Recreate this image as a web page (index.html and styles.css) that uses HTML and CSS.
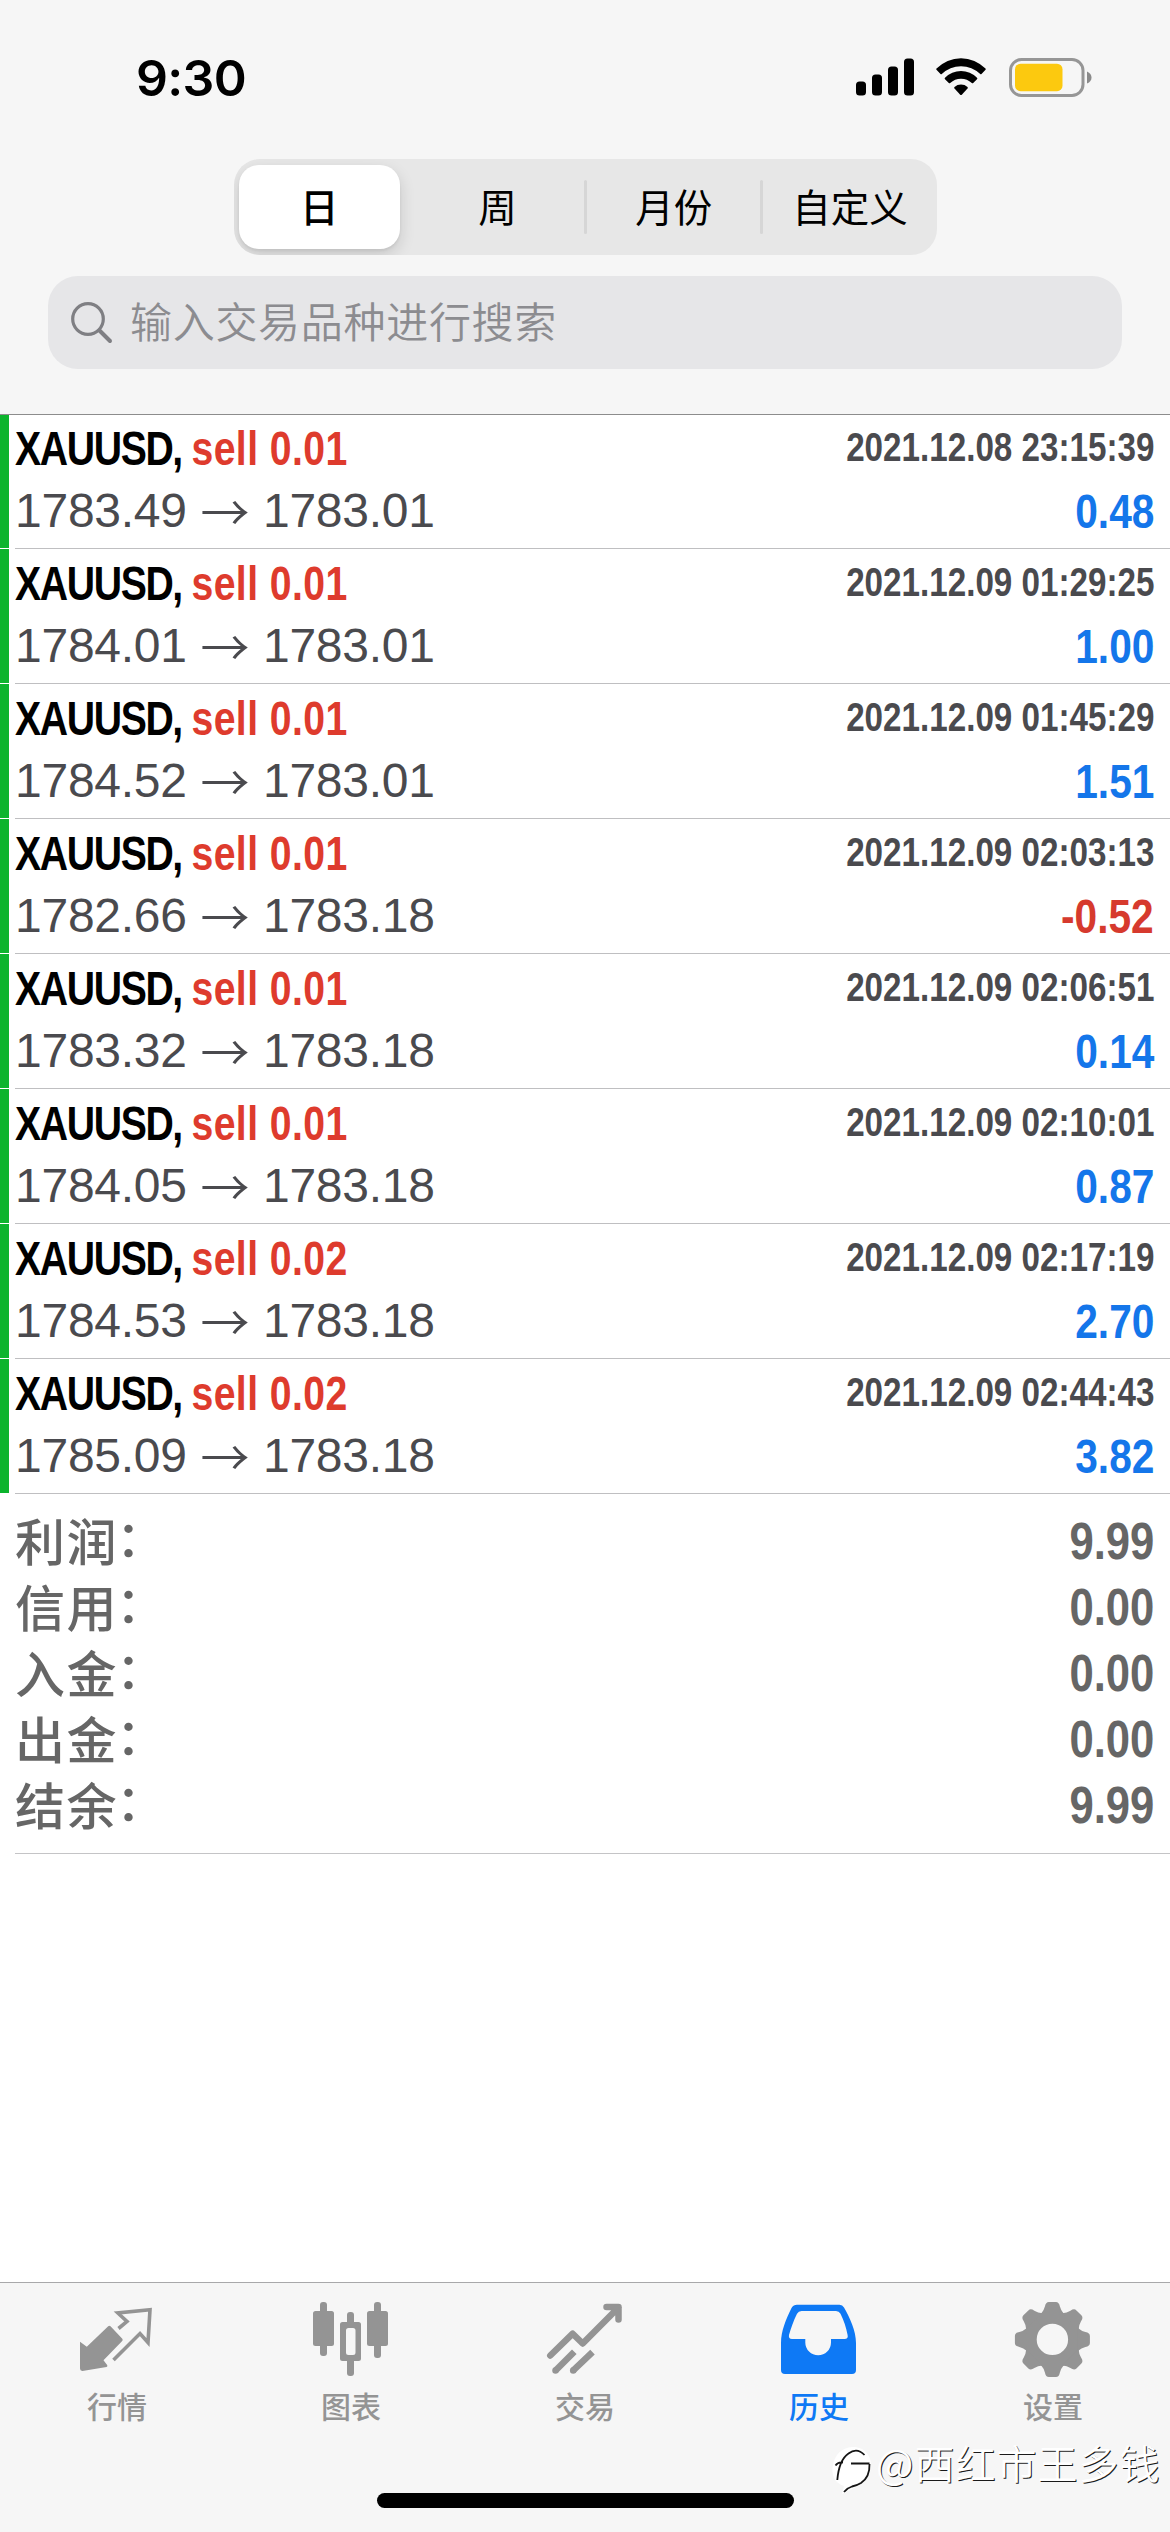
FILE: index.html
```html
<!DOCTYPE html>
<html lang="zh-CN">
<head>
<meta charset="utf-8">
<title>历史</title>
<link rel="stylesheet" href="styles.css">
</head>
<body>
<header class="header">
  <div class="status">
    <span class="clock">9:30</span>
    <div class="status-icons">
      <svg class="signal" width="58" height="38" viewBox="0 0 58 38"><rect x="0" y="23.5" width="10" height="14" rx="3.5"/><rect x="16" y="16.5" width="10" height="21" rx="3.5"/><rect x="32" y="8.500" width="10" height="29" rx="3.500"/><rect x="48" y="0.5" width="10" height="37" rx="3.500"/></svg>
      <svg class="wifi" width="50" height="38" viewBox="0 0 50 38"><path d="M0.500 10.600A34 34 0 0 1 49.500 10.600Q50 11.300 49.300 12L45.500 16Q44.800 16.500 44.200 16A27.500 27.500 0 0 0 5.800 16Q5.200 16.500 4.500 16L.7 12Q0 11.300 .5 10.600Z"/><path d="M9 19.700A22.500 22.500 0 0 1 41 19.700Q41.800 20.400 41 21.200L37.200 25Q36.500 25.500 35.800 25A15.800 15.800 0 0 0 14.200 25Q13.500 25.500 12.800 25L9 21.200Q8.200 20.400 9 19.700Z"/><path d="M18.500 29A10 10 0 0 1 31.500 29Q32.200 29.600 31.500 30.400L25.800 36.700Q25 37.500 24.200 36.700L18.500 30.400Q17.800 29.600 18.500 29Z"/></svg>
      <svg class="battery" width="83" height="39" viewBox="0 0 83 39"><rect x="1.500" y="1.500" width="72.500" height="36" rx="11" fill="none" stroke="#969696" stroke-width="3"/><rect x="6" y="5.700" width="47.500" height="27.500" rx="5.500" fill="#fcc90f"/><path d="M78 13.500Q82.500 15.500 82.500 19.500T78 25.500Z" fill="#8a8a8a"/></svg>
    </div>
  </div>
  <nav class="segments">
    <span class="segment selected">日</span>
    <span class="segment">周</span>
    <span class="segment divided">月份</span>
    <span class="segment divided">自定义</span>
  </nav>
  <div class="search">
    <svg width="42" height="42" viewBox="0 0 42 42" fill="none" stroke="#7f7f83" stroke-linecap="round"><circle cx="17" cy="17" r="15.300" stroke-width="3.200"/><path d="M28.500 28.500L39 39" stroke-width="4"/></svg>
    <span>输入交易品种进行搜索</span>
  </div>
</header>

<main class="history">
  <ul class="deals">
    <li class="deal"><div class="body"><div class="line"><span class="title">XAUUSD, <b>sell 0.01</b></span><span class="time">2021.12.08 23:15:39</span></div><div class="line"><span class="prices">1783.49 <i>→</i> 1783.01</span><span class="profit">0.48</span></div></div></li>
    <li class="deal"><div class="body"><div class="line"><span class="title">XAUUSD, <b>sell 0.01</b></span><span class="time">2021.12.09 01:29:25</span></div><div class="line"><span class="prices">1784.01 <i>→</i> 1783.01</span><span class="profit">1.00</span></div></div></li>
    <li class="deal"><div class="body"><div class="line"><span class="title">XAUUSD, <b>sell 0.01</b></span><span class="time">2021.12.09 01:45:29</span></div><div class="line"><span class="prices">1784.52 <i>→</i> 1783.01</span><span class="profit">1.51</span></div></div></li>
    <li class="deal"><div class="body"><div class="line"><span class="title">XAUUSD, <b>sell 0.01</b></span><span class="time">2021.12.09 02:03:13</span></div><div class="line"><span class="prices">1782.66 <i>→</i> 1783.18</span><span class="profit loss">-0.52</span></div></div></li>
    <li class="deal"><div class="body"><div class="line"><span class="title">XAUUSD, <b>sell 0.01</b></span><span class="time">2021.12.09 02:06:51</span></div><div class="line"><span class="prices">1783.32 <i>→</i> 1783.18</span><span class="profit">0.14</span></div></div></li>
    <li class="deal"><div class="body"><div class="line"><span class="title">XAUUSD, <b>sell 0.01</b></span><span class="time">2021.12.09 02:10:01</span></div><div class="line"><span class="prices">1784.05 <i>→</i> 1783.18</span><span class="profit">0.87</span></div></div></li>
    <li class="deal"><div class="body"><div class="line"><span class="title">XAUUSD, <b>sell 0.02</b></span><span class="time">2021.12.09 02:17:19</span></div><div class="line"><span class="prices">1784.53 <i>→</i> 1783.18</span><span class="profit">2.70</span></div></div></li>
    <li class="deal"><div class="body"><div class="line"><span class="title">XAUUSD, <b>sell 0.02</b></span><span class="time">2021.12.09 02:44:43</span></div><div class="line"><span class="prices">1785.09 <i>→</i> 1783.18</span><span class="profit">3.82</span></div></div></li>
  </ul>
  <dl class="summary">
    <div class="total"><dt>利润<span class="colon">：</span></dt><dd>9.99</dd></div>
    <div class="total"><dt>信用<span class="colon">：</span></dt><dd>0.00</dd></div>
    <div class="total"><dt>入金<span class="colon">：</span></dt><dd>0.00</dd></div>
    <div class="total"><dt>出金<span class="colon">：</span></dt><dd>0.00</dd></div>
    <div class="total"><dt>结余<span class="colon">：</span></dt><dd>9.99</dd></div>
  </dl>
</main>

<footer class="footer">
  <nav class="tabs">
    <div class="tab">
      <svg width="80" height="80" viewBox="0 0 80 80"><path d="M31.200 26.300Q32.300 25.300 33.500 26.300L45.300 38.800Q46.200 40 45.200 41L26.500 60.200L30.300 65.300Q30.600 66.700 29.500 67L5.500 70.900Q3 71 3 68.500V41.700L9.800 46.700Z" fill="currentColor"/><path d="M41.500 28.500L50 21.500L40.800 13L73 9.700L71 42.500L63 33.500L36.500 60" fill="none" stroke="currentColor" stroke-width="3.600"/></svg>
      <span>行情</span>
    </div>
    <div class="tab">
      <svg width="80" height="80" viewBox="0 0 80 80" fill="currentColor"><rect x="2" y="11" width="21" height="35" rx="2.500"/><rect x="9" y="2" width="7" height="54" rx="3"/><rect x="56" y="11" width="21" height="35" rx="2.500"/><rect x="63" y="2" width="7" height="56" rx="3"/><rect x="36" y="12" width="7" height="14" rx="3"/><rect x="36" y="58" width="7" height="18" rx="3"/><path fill-rule="evenodd" d="M31.500 22h16a2.500 2.500 0 0 1 2.500 2.500v34a2.500 2.500 0 0 1-2.500 2.500h-16a2.500 2.500 0 0 1-2.500-2.500v-34a2.500 2.500 0 0 1 2.500-2.500zM37.500 28a2.500 2.500 0 0 0-2.500 2.500v22a2.500 2.500 0 0 0 2.500 2.500h4.500a2.500 2.500 0 0 0 2.500-2.500v-22a2.500 2.500 0 0 0-2.500-2.500z"/></svg>
      <span>图表</span>
    </div>
    <div class="tab">
      <svg width="80" height="80" viewBox="0 0 80 80" fill="none" stroke="currentColor" stroke-width="6.500" stroke-linejoin="round"><path d="M5.300 55.500L27.700 33.700L37.700 43.500L73.500 7.500M61.500 7H73.500V19.500" stroke-linecap="round"/><path d="M10.300 70.700L29.300 51.700M28 70.700L47.500 52.200"/><circle cx="10.500" cy="70.500" r="3.250" fill="currentColor" stroke="none"/><circle cx="28.200" cy="70.500" r="3.250" fill="currentColor" stroke="none"/></svg>
      <span>交易</span>
    </div>
    <div class="tab active">
      <svg width="80" height="80" viewBox="0 0 80 80"><path fill="currentColor" fill-rule="evenodd" d="M18 4.700H60.500Q63.500 4.700 65 7.500C71 18 77 31 77 43V70Q77 74 73 74H6Q2 74 2 70V43C2 31 7 19 12.500 8Q14.500 4.700 18 4.700ZM22.500 11Q19.500 11 18 13.800C14.500 21 12 28 10 35Q9.300 39 13 39H26.300V42.500A12.800 12.800 0 0 0 52 42.500V39H65.500Q69.500 39 68.600 35C67 27 65 21 61.500 13.800Q60 11 57 11Z"/></svg>
      <span>历史</span>
    </div>
    <div class="tab">
      <svg width="80" height="80" viewBox="0 0 80 80"><defs><path id="tooth" d="M-11.500 -25.500Q-8.500 -29 -7.500 -33Q-6.700 -37.500 -3.500 -37.500H3.500Q6.700 -37.500 7.500 -33Q8.500 -29 11.500 -25.500Z"/></defs><g transform="translate(39.400 39.400)" fill="currentColor"><circle r="22" fill="none" stroke="currentColor" stroke-width="12.600"/><use href="#tooth"/><use href="#tooth" transform="rotate(45)"/><use href="#tooth" transform="rotate(90)"/><use href="#tooth" transform="rotate(135)"/><use href="#tooth" transform="rotate(180)"/><use href="#tooth" transform="rotate(225)"/><use href="#tooth" transform="rotate(270)"/><use href="#tooth" transform="rotate(315)"/></g></svg>
      <span>设置</span>
    </div>
  </nav>
  <div class="home-indicator"></div>
</footer>

<div class="watermark">
  <svg width="46" height="56" viewBox="0 0 46 56"><path d="M22 7C33 6 42 15 41 27C40 40 30 46 24 48L12 54L14 46C4 43 1 34 3 25C5 14 12 8 22 7Z" fill="#fff"/><path d="M5.500 25.500Q8 21.500 13 22.500M7.300 40Q9 20 18.500 13.500Q27 7 34.500 15M21 23.500H39.500M39.500 24Q40 37 31 43Q27 45.500 22 46.500Q17 48 14 52" fill="none" stroke="#151515" stroke-width="1.800"/></svg>
  <span>@西红市王多钱</span>
</div>
</body>
</html>
```
FILE: styles.css
```css
* { box-sizing: border-box; margin: 0; padding: 0; }

body {
  position: relative;
  display: flex;
  flex-direction: column;
  width: 1170px;
  height: 2532px;
  overflow: hidden;
  background: #fff;
  font-family: "Liberation Sans", "Noto Sans CJK SC", sans-serif;
}

svg { display: block; }

/* Header */
.header {
  display: flex;
  flex-direction: column;
  align-items: center;
  height: 415px;
  background: #f6f6f6;
  border-bottom: 1px solid #8c8c8c;
}

.status {
  display: flex;
  justify-content: space-between;
  width: 100%;
  height: 159px;
  padding: 58px 78px 0 136px;
}

.clock {
  font: 600 50px/40px Inter, sans-serif;
  letter-spacing: -0.7px;
}

.status-icons { display: flex; }
.wifi { margin: 0 23px 0 22px; }

.segments {
  display: flex;
  width: 703px;
  height: 96px;
  padding: 6px 0 6px 5px;
  border-radius: 26px;
  background: #e7e7e7;
  overflow: hidden;
}

.segment {
  display: flex;
  align-items: center;
  justify-content: center;
  position: relative;
  width: 177px;
  padding: 0 0 4px 3px;
  font: 400 38.5px/50px "Noto Sans CJK SC", sans-serif;
  color: #000;
}

.segment.selected {
  width: 162px;
  margin-right: 8px;
  padding-left: 0;
  border-radius: 20px;
  background: #fff;
  box-shadow: 0 6px 16px rgba(0, 0, 0, .14), 0 2px 3px rgba(0, 0, 0, .06);
  font-weight: 500;
}

.segment.divided::before {
  content: "";
  position: absolute;
  left: 0;
  top: 15px;
  width: 3px;
  height: 54px;
  border-radius: 2px;
  background: #d6d6d6;
}

.search {
  display: flex;
  align-items: center;
  gap: 17px;
  width: 1074px;
  height: 93px;
  margin-top: 21px;
  padding-left: 23px;
  border-radius: 30px;
  background: #e6e6e8;
}

.search span {
  margin-bottom: 6px;
  font: 350 42px/60px "Noto Sans CJK SC", sans-serif;
  letter-spacing: .7px;
  color: #8c8c90;
}

/* Deals */
.history { flex: 1; }
.deals { list-style: none; }

.deal {
  display: flex;
  height: 135px;
  padding-left: 15px;
  background: linear-gradient(#0cb42d, #0cb42d) left top / 9px 134px no-repeat;
}

.deal .body {
  flex: 1;
  display: flex;
  flex-direction: column;
  gap: 13px;
  padding: 9px 16px 0 0;
  border-bottom: 1px solid #bfbfc1;
}

.deal:first-child { height: 134px; background-size: 9px 133px; }
.deal:first-child .body { padding-top: 8px; }

.line {
  display: flex;
  justify-content: space-between;
  height: 50px;
  white-space: nowrap;
}

.title {
  font-size: 49px;
  line-height: 50px;
  font-weight: 700;
  letter-spacing: -1.7px;
  color: #000;
  transform: scaleX(.8);
  transform-origin: left;
}

.title b { color: #de3b2d; letter-spacing: .5px; }

.time {
  font-size: 40px;
  line-height: 48px;
  font-weight: 700;
  color: #4a4a4e;
  transform: scaleX(.83);
  transform-origin: right;
}

.prices {
  font-size: 48px;
  line-height: 50px;
  letter-spacing: -.25px;
  color: #4a4a4e;
}

.prices i {
  display: inline-block;
  width: 50px;
  height: 50px;
  font: 350 49px/48px "Noto Sans CJK SC", sans-serif;
  text-align: center;
  vertical-align: top;
}

.profit {
  font-size: 49px;
  line-height: 50px;
  font-weight: 700;
  color: #1476ea;
  transform: scaleX(.83);
  transform-origin: right;
}

.profit.loss { color: #d63a2e; }

/* Summary */
.summary {
  height: 360px;
  margin-left: 15px;
  padding: 15px 16px 0 0;
  border-bottom: 1px solid #c4c4c6;
}

.total {
  display: flex;
  justify-content: space-between;
  height: 66px;
  line-height: 66px;
  color: #666;
}

.total dt {
  font-family: "Noto Sans CJK SC", sans-serif;
  font-size: 50px;
  line-height: 60px;
  font-weight: 500;
  letter-spacing: 1.5px;
}

.colon { position: relative; top: -4px; left: -2px; }

.total dd {
  font-size: 51px;
  font-weight: 700;
  transform: scaleX(.855);
  transform-origin: right;
}

/* Tab bar */
.footer {
  display: flex;
  flex-direction: column;
  align-items: center;
  height: 250px;
  border-top: 1px solid #a8a8aa;
  background: #f6f6f6;
}

.tabs {
  display: flex;
  width: 100%;
  height: 210px;
  padding-top: 17px;
}

.tab {
  flex: 1;
  display: flex;
  flex-direction: column;
  align-items: center;
  gap: 5px;
  color: #949494;
}

.tab.active { color: #0e79f5; }

.tab span { font: 500 30px/40px "Noto Sans CJK SC", sans-serif; }

.home-indicator {
  width: 417px;
  height: 15px;
  border-radius: 8px;
  background: #000;
}

/* Watermark laid over the tab bar */
.watermark {
  position: absolute;
  left: 830px;
  top: 2440px;
  display: flex;
}

.watermark span {
  font: 350 40px/44px "Noto Sans CJK SC", sans-serif;
  letter-spacing: 1px;
  color: #fff;
  white-space: nowrap;
  text-shadow: 1px 1px 0 #1a1a1a;
}
```
